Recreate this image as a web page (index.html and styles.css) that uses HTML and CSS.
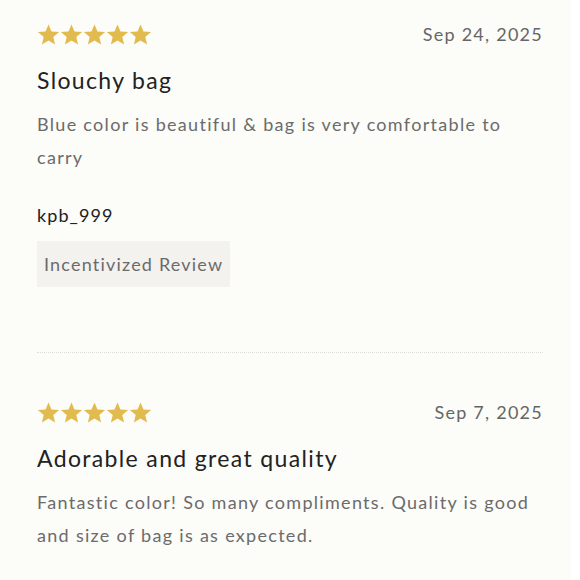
FILE: index.html
```html
<!DOCTYPE html>
<html lang="en">
<head>
<meta charset="utf-8">
<link rel="stylesheet" href="styles.css">
</head>
<body>
<div class="reviews">
  <div class="review">
    <div class="review-head">
      <div class="stars">
        <svg viewBox="0 0 24 24" class="star"><path d="M12 1.5l3.1 7.4 8 .6-6.1 5.2 1.9 7.8L12 18.3l-6.9 4.2 1.9-7.8L.9 9.5l8-.6z"/></svg>
        <svg viewBox="0 0 24 24" class="star"><path d="M12 1.5l3.1 7.4 8 .6-6.1 5.2 1.9 7.8L12 18.3l-6.9 4.2 1.9-7.8L.9 9.5l8-.6z"/></svg>
        <svg viewBox="0 0 24 24" class="star"><path d="M12 1.5l3.1 7.4 8 .6-6.1 5.2 1.9 7.8L12 18.3l-6.9 4.2 1.9-7.8L.9 9.5l8-.6z"/></svg>
        <svg viewBox="0 0 24 24" class="star"><path d="M12 1.5l3.1 7.4 8 .6-6.1 5.2 1.9 7.8L12 18.3l-6.9 4.2 1.9-7.8L.9 9.5l8-.6z"/></svg>
        <svg viewBox="0 0 24 24" class="star"><path d="M12 1.5l3.1 7.4 8 .6-6.1 5.2 1.9 7.8L12 18.3l-6.9 4.2 1.9-7.8L.9 9.5l8-.6z"/></svg>
      </div>
      <div class="date">Sep 24, 2025</div>
    </div>
    <h3 class="title">Slouchy bag</h3>
    <p class="body">Blue color is beautiful &amp; bag is very comfortable to carry</p>
    <div class="author">kpb_999</div>
    <div class="badge">Incentivized Review</div>
  </div>
  <div class="review">
    <div class="review-head">
      <div class="stars">
        <svg viewBox="0 0 24 24" class="star"><path d="M12 1.5l3.1 7.4 8 .6-6.1 5.2 1.9 7.8L12 18.3l-6.9 4.2 1.9-7.8L.9 9.5l8-.6z"/></svg>
        <svg viewBox="0 0 24 24" class="star"><path d="M12 1.5l3.1 7.4 8 .6-6.1 5.2 1.9 7.8L12 18.3l-6.9 4.2 1.9-7.8L.9 9.5l8-.6z"/></svg>
        <svg viewBox="0 0 24 24" class="star"><path d="M12 1.5l3.1 7.4 8 .6-6.1 5.2 1.9 7.8L12 18.3l-6.9 4.2 1.9-7.8L.9 9.5l8-.6z"/></svg>
        <svg viewBox="0 0 24 24" class="star"><path d="M12 1.5l3.1 7.4 8 .6-6.1 5.2 1.9 7.8L12 18.3l-6.9 4.2 1.9-7.8L.9 9.5l8-.6z"/></svg>
        <svg viewBox="0 0 24 24" class="star"><path d="M12 1.5l3.1 7.4 8 .6-6.1 5.2 1.9 7.8L12 18.3l-6.9 4.2 1.9-7.8L.9 9.5l8-.6z"/></svg>
      </div>
      <div class="date">Sep 7, 2025</div>
    </div>
    <h3 class="title">Adorable and great quality</h3>
    <p class="body">Fantastic color! So many compliments. Quality is good and size of bag is as expected.</p>
  </div>
</div>
</body>
</html>
```

FILE: styles.css
```css
html {
  margin: 0;
  padding: 0;
  background: #ffffff;
}
body {
  margin: 0;
  padding: 0;
  background: #fcfcf9;
  font-family: Lato, "Noto Sans", sans-serif;
  width: 571px;
  height: 580px;
  overflow: hidden;
}
.reviews {
  padding: 22px 28px 0 37px;
}
.review {
  padding-bottom: 65px;
}
.review:last-child {
  padding-bottom: 0;
}
.review + .review {
  border-top: 1px dotted #dcdcd8;
  padding-top: 47px;
}
.review-head {
  display: flex;
  justify-content: space-between;
  align-items: center;
  height: 24px;
}
.stars {
  display: flex;
}
.star {
  width: 23px;
  height: 23px;
  fill: #e2bb4f;
}
.date {
  font-size: 18px;
  color: #666;
  letter-spacing: 1.25px;
}
.title {
  margin: 19px 0 0 0;
  font-size: 23px;
  font-weight: 400;
  color: #222;
  letter-spacing: 1.35px;
  line-height: 30px;
}
.body {
  margin: 13px 0 0 0;
  font-size: 18px;
  line-height: 33px;
  color: #6b6b6b;
  letter-spacing: 1.3px;
}
.author {
  margin-top: 29px;
  font-size: 18px;
  color: #222;
  letter-spacing: 1.1px;
  line-height: 24px;
}
.badge {
  display: inline-block;
  margin-top: 14px;
  background: #f3f2ee;
  padding: 0 7px;
  line-height: 46px;
  font-size: 18px;
  color: #6b6b6b;
  letter-spacing: 1.2px;
}
```
